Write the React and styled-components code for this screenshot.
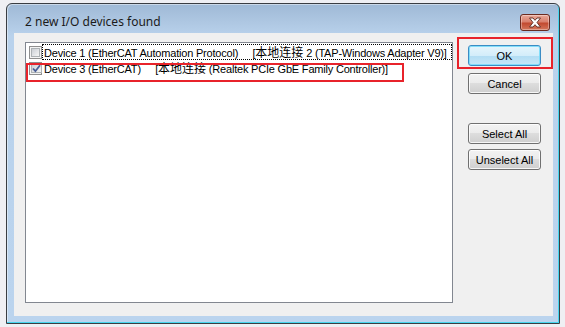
import React from 'react'
import styled, { createGlobalStyle } from 'styled-components'

const GlobalStyle = createGlobalStyle`
  html, body {
    margin: 0;
    padding: 0;
  }
  body {
    background: #efeff3;
    width: 565px;
    height: 327px;
    overflow: hidden;
  }
`

const FONT = `"Liberation Sans", "Noto Sans CJK SC", Arial, sans-serif`

const Page = styled.div`
  padding: 3px 0 0 6px;
`

const Window = styled.div`
  width: 554px;
  height: 321px;
  box-sizing: border-box;
  border: 1px solid #3a3d42;
  border-radius: 6px 6px 0 0;
  padding: 0 6px 7px 7px;
  display: flex;
  flex-direction: column;
  background: linear-gradient(#9fb9d6 0px, #aec7e2 18px, #b9d2ec 32px, #bbd4ee 100%);
  box-shadow: inset -1px -1px 0 #47d6ef, inset 1px 1px 0 rgba(255, 255, 255, 0.45);
`

const TitleBar = styled.div`
  height: 29px;
  box-sizing: border-box;
  padding: 7px 3px 0 11px;
  display: flex;
  align-items: center;
  justify-content: space-between;
`

const Title = styled.div`
  font-family: "Noto Sans", ${FONT};
  font-size: 12px;
  color: #1b1b1b;
  line-height: 16px;
`

const CloseButton = styled.div`
  width: 30px;
  height: 17px;
  box-sizing: border-box;
  border: 1px solid #6b2b20;
  border-radius: 3px;
  display: flex;
  align-items: center;
  justify-content: center;
  background: linear-gradient(#e9a99a 0%, #d9806d 45%, #c24a30 55%, #d3775c 100%);
  box-shadow: inset 0 0 0 1px rgba(255, 255, 255, 0.35);
`

const Client = styled.div`
  flex: 1;
  background: #f0f0f0;
  padding: 9px 12px 13px 11px;
  display: flex;
  gap: 15px;
`

const ListBox = styled.div`
  position: relative;
  width: 428px;
  height: 261px;
  box-sizing: border-box;
  border: 1px solid #828790;
  background: #fff;
  padding: 1px 0 0 3px;
  overflow: hidden;
`

const Row = styled.div`
  display: flex;
  align-items: center;
  height: 16px;
`

const Check = styled.span`
  width: 13px;
  height: 13px;
  flex: none;
  box-sizing: border-box;
  border: 1px solid #8f8f8f;
  padding: 1px;
  background: #f4f4f4;
  display: flex;
`

const CheckInner = styled.span`
  flex: 1;
  border: 1px solid #adb2b5;
  background: linear-gradient(135deg, #cbcfd5, #f6f6f6);
  display: flex;
  align-items: center;
  justify-content: center;
`

const Label = styled.div`
  flex: 1;
  height: 16px;
  box-sizing: border-box;
  border: 1px dotted ${(p) => (p.$focused ? '#000' : 'transparent')};
  padding-left: 1px;
  font-family: ${FONT};
  font-size: 11px;
  letter-spacing: -0.2px;
  line-height: 14px;
  color: #000;
  white-space: pre;
  overflow: hidden;
`

const Cjk = styled.span`
  font-family: "Noto Sans CJK SC", sans-serif;
  font-size: 12px;
  letter-spacing: 0;
`

const Mark = styled.div`
  position: absolute;
  border: 2px solid #e8232b;
  box-sizing: border-box;
  left: ${(p) => p.$x}px;
  top: ${(p) => p.$y}px;
  width: ${(p) => p.$w}px;
  height: ${(p) => p.$h}px;
  pointer-events: none;
`

const Buttons = styled.div`
  width: 73px;
  padding-top: 3px;
  display: flex;
  flex-direction: column;
`

const ButtonWrap = styled.div`
  position: relative;
  margin-bottom: ${(p) => p.$gap}px;
`

const Button = styled.div`
  height: 21px;
  box-sizing: border-box;
  border: 1px solid ${(p) => (p.$default ? '#3c8cc4' : '#707070')};
  border-radius: 3px;
  display: flex;
  align-items: center;
  justify-content: center;
  font-family: ${FONT};
  font-size: 11px;
  color: #000;
  background: ${(p) =>
    p.$default
      ? 'linear-gradient(#e6f5fc 0%, #d3edfa 50%, #b1dcf3 50%, #c6e7f8 100%)'
      : 'linear-gradient(#f2f2f2 0%, #ebebeb 50%, #dddddd 50%, #cfcfcf 100%)'};
  box-shadow: inset 0 0 0 1px
    ${(p) => (p.$default ? 'rgba(120, 220, 250, 0.9)' : 'rgba(255, 255, 255, 0.8)')};
`

const devices = [
  {
    id: 1,
    name: 'Device 1 (EtherCAT Automation Protocol)     [',
    adapter: '本地连接',
    rest: ' 2 (TAP-Windows Adapter V9)]',
    checked: false,
    focused: true,
  },
  {
    id: 3,
    name: 'Device 3 (EtherCAT)     [',
    adapter: '本地连接',
    rest: ' (Realtek PCIe GbE Family Controller)]',
    checked: true,
    focused: false,
  },
]

const CloseIcon = () => (
  <svg width="14" height="11" viewBox="0 0 14 11">
    <path
      d="M1.5 1 H5 L7 3.3 L9 1 H12.5 L9 5.5 L12.5 10 H9 L7 7.7 L5 10 H1.5 L5 5.5 Z"
      fill="#fff"
      stroke="#5b2a22"
      strokeWidth="0.9"
      strokeLinejoin="round"
    />
  </svg>
)

const CheckMark = () => (
  <svg width="9" height="9" viewBox="0 0 9 9">
    <path d="M1 4.5 L3.4 7.2 L8 1.2" fill="none" stroke="#4a5f97" strokeWidth="1.8" />
  </svg>
)

const App = () => {
  return (
    <>
      <GlobalStyle />
      <Page>
        <Window>
          <TitleBar>
            <Title>2 new I/O devices found</Title>
            <CloseButton>
              <CloseIcon />
            </CloseButton>
          </TitleBar>
          <Client>
            <ListBox>
              {devices.map((d) => (
                <Row key={d.id}>
                  <Check>
                    <CheckInner>{d.checked && <CheckMark />}</CheckInner>
                  </Check>
                  <Label $focused={d.focused}>
                    {d.name}
                    <Cjk>{d.adapter}</Cjk>
                    {d.rest}
                  </Label>
                </Row>
              ))}
              <Mark $x={0} $y={20} $w={378} $h={19} />
            </ListBox>
            <Buttons>
              <ButtonWrap $gap={7}>
                <Button $default>OK</Button>
                <Mark $x={-11} $y={-8} $w={96} $h={32} />
              </ButtonWrap>
              <ButtonWrap $gap={29}>
                <Button>Cancel</Button>
              </ButtonWrap>
              <ButtonWrap $gap={5}>
                <Button>Select All</Button>
              </ButtonWrap>
              <ButtonWrap $gap={0}>
                <Button>Unselect All</Button>
              </ButtonWrap>
            </Buttons>
          </Client>
        </Window>
      </Page>
    </>
  )
}

export default App
